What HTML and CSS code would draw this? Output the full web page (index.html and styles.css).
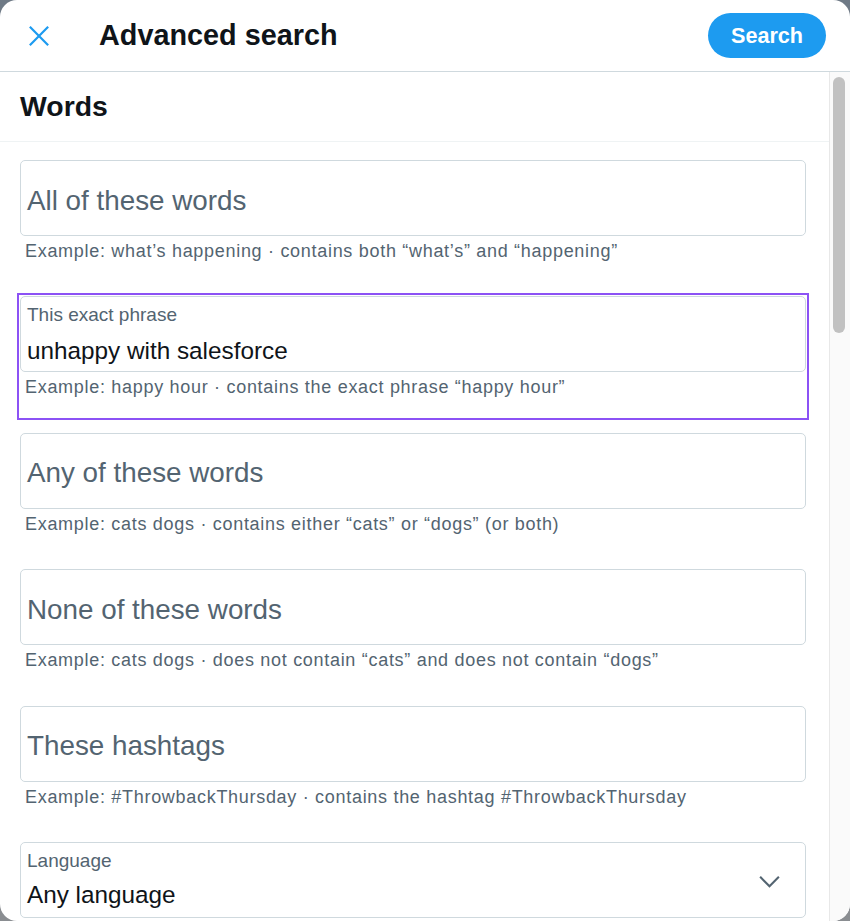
FILE: index.html
```html
<!DOCTYPE html>
<html lang="en">
<head>
<meta charset="utf-8">
<title>Advanced search</title>
<link rel="stylesheet" href="styles.css">
</head>
<body>
<div class="modal">
  <header class="header">
    <button class="close" aria-label="Close">
      <svg viewBox="0 0 24 24" width="24" height="24"><path d="M2 2 L22 22 M22 2 L2 22" stroke="#1d9bf0" stroke-width="2.4" fill="none" stroke-linecap="butt"/></svg>
    </button>
    <h1 class="title">Advanced search</h1>
    <button class="search-btn">Search</button>
  </header>
  <div class="body">
    <div class="scroll">
      <div class="section-head"><h2>Words</h2></div>
      <div class="fields">
        <div class="group">
          <div class="field"><span class="placeholder">All of these words</span></div>
          <div class="help">Example: what’s happening · contains both “what’s” and “happening”</div>
        </div>
        <div class="group focused">
          <div class="field filled">
            <span class="label">This exact phrase</span>
            <span class="value">unhappy with salesforce</span>
          </div>
          <div class="help">Example: happy hour · contains the exact phrase “happy hour”</div>
        </div>
        <div class="group">
          <div class="field"><span class="placeholder">Any of these words</span></div>
          <div class="help">Example: cats dogs · contains either “cats” or “dogs” (or both)</div>
        </div>
        <div class="group">
          <div class="field"><span class="placeholder">None of these words</span></div>
          <div class="help">Example: cats dogs · does not contain “cats” and does not contain “dogs”</div>
        </div>
        <div class="group">
          <div class="field"><span class="placeholder">These hashtags</span></div>
          <div class="help">Example: #ThrowbackThursday · contains the hashtag #ThrowbackThursday</div>
        </div>
        <div class="group">
          <div class="field filled select">
            <div class="select-text">
              <span class="label lang">Language</span>
              <span class="value lang">Any language</span>
            </div>
            <svg class="chevron" viewBox="0 0 24 16" width="24" height="16"><path d="M2 3 L12 13 L22 3" stroke="#536471" stroke-width="2.2" fill="none"/></svg>
          </div>
        </div>
      </div>
    </div>
    <div class="scrollbar"><div class="thumb"></div></div>
  </div>
</div>
</body>
</html>
```

FILE: styles.css
```css
* { box-sizing: border-box; }
html, body { margin: 0; padding: 0; }
body {
  width: 850px;
  height: 921px;
  background: linear-gradient(180deg, #6f7a86 0%, #8a8d91 100%);
  font-family: "Liberation Sans", Arial, sans-serif;
  overflow: hidden;
}
.modal {
  width: 850px;
  height: 921px;
  background: #ffffff;
  border-radius: 17px;
  overflow: hidden;
  display: flex;
  flex-direction: column;
}
.header {
  height: 72px;
  flex: none;
  display: flex;
  align-items: center;
  padding: 0 24px 0 26px;
  border-bottom: 1px solid #cfd9de;
}
.close {
  width: 26px;
  height: 26px;
  padding: 0;
  border: 0;
  background: none;
  display: flex;
  align-items: center;
  justify-content: center;
  margin-right: 47px;
}
.close svg { width: 22px; height: 22px; }
.title {
  margin: 0;
  flex: 1;
  font-size: 28.8px;
  font-weight: 700;
  color: #0f1419;
  letter-spacing: 0;
}
.search-btn {
  width: 118px;
  height: 45px;
  border: 0;
  border-radius: 23px;
  background: #1d9bf0;
  color: #ffffff;
  font-family: "Liberation Sans", Arial, sans-serif;
  font-weight: 700;
  font-size: 21.6px;
  padding: 0;
  margin-top: 0;
}
.body {
  flex: 1;
  display: flex;
  min-height: 0;
}
.scroll {
  flex: 1;
  overflow: hidden;
}
.section-head {
  height: 70px;
  display: flex;
  align-items: center;
  padding: 0 20px;
  border-bottom: 1px solid #eff3f4;
}
.section-head h2 {
  margin: 0;
  font-size: 28.4px;
  font-weight: 700;
  color: #0f1419;
  padding-bottom: 1px;
}
.fields {
  padding: 18px 23px 0 20px;
  display: flex;
  flex-direction: column;
  gap: 15.4px;
}
.group {
  height: 121px;
}
.group.focused {
  outline: 2px solid #8c52f5;
  outline-offset: 1px;
}
.field {
  height: 76px;
  border: 1px solid #cfd9de;
  border-radius: 5px;
  display: flex;
  align-items: center;
  padding: 5px 6px 0;
}
.placeholder {
  font-size: 27.8px;
  color: #536471;
}
.field.filled {
  flex-direction: column;
  align-items: flex-start;
  justify-content: flex-start;
  padding: 7px 6px 0;
}
.label {
  font-size: 19px;
  color: #536471;
  line-height: 22px;
}
.value {
  font-size: 24.3px;
  color: #0f1419;
  line-height: 28px;
  margin-top: 11px;
}
.help {
  font-size: 18px;
  letter-spacing: 0.7px;
  color: #536471;
  padding: 6px 5px 0;
  line-height: 19px;
  white-space: nowrap;
}
.field.select {
  flex-direction: row;
  align-items: center;
  padding: 7px 24px 0 6px;
}
.select-text {
  flex: 1;
  display: flex;
  flex-direction: column;
  align-self: flex-start;
}
.value.lang { margin-top: 9px; }
.chevron {
  width: 23px;
  height: 15px;
  margin-top: -4px;
}
.scrollbar {
  width: 21px;
  flex: none;
  background: #fafafa;
  border-left: 1px solid #e8e8e8;
  padding: 5px 4px 0 3px;
}
.thumb {
  width: 12px;
  height: 256px;
  border-radius: 6px;
  background: #c1c1c1;
}
```
